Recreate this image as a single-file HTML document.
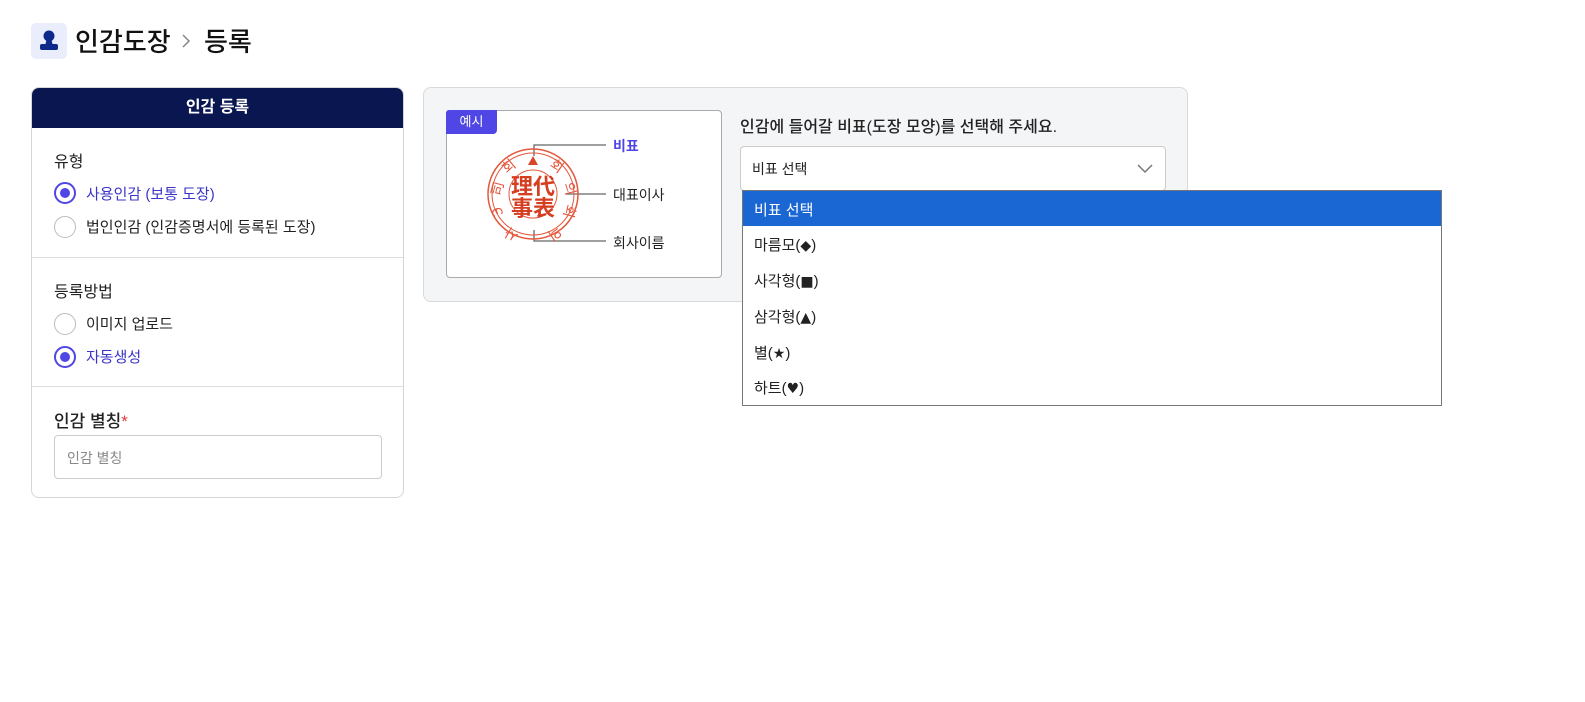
<!DOCTYPE html>
<html><head><meta charset="utf-8"><style>
*{box-sizing:border-box;margin:0;padding:0}
body{width:1585px;height:702px;background:#fff;font-family:"Liberation Sans","Noto Sans CJK KR",sans-serif;color:#222;position:relative;overflow:hidden}
.a{position:absolute;white-space:nowrap}
.radio{position:absolute;width:22px;height:22px;border-radius:50%;border:1px solid #bbb;background:#fff}
.radio.on{border:2px solid #4f46e5}
.radio.on:after{content:"";position:absolute;left:4px;top:4px;width:10px;height:10px;border-radius:50%;background:#4f46e5}
.opt{position:absolute;left:754px;font-size:15px;color:#222}
.s{font-family:"DejaVu Sans",sans-serif;font-size:14px}
</style></head><body>
<div class="a" style="left:31px;top:23px;width:36px;height:36px;background:#eaedfb;border-radius:5px">
<svg width="36" height="36" viewBox="0 0 36 36"><circle cx="18" cy="13" r="5.5" fill="#0d2a8a"/><path d="M15.5 17h5l1 4h-7z" fill="#0d2a8a"/><rect x="9" y="21" width="18" height="6" rx="2" fill="#0d2a8a"/></svg></div>
<div class="a" style="left:75px;top:22px;font-size:26px;font-weight:500;color:#111">인감도장</div>
<svg class="a" style="left:180px;top:33px" width="12" height="16"><path d="M3 2l6 6-6 6" fill="none" stroke="#888" stroke-width="1.5"/></svg>
<div class="a" style="left:204px;top:22px;font-size:26px;font-weight:500;color:#111">등록</div>

<div class="a" style="left:31px;top:87px;width:373px;height:411px;border:1px solid #d6d6d6;border-radius:8px;overflow:hidden">
<div style="height:40px;background:#0a1650;color:#fff;font-weight:bold;font-size:16px;text-align:center;line-height:40px">인감 등록</div>
<div style="position:absolute;left:0;right:0;top:169px;border-top:1px solid #ddd"></div>
<div style="position:absolute;left:0;right:0;top:298px;border-top:1px solid #ddd"></div>
</div>
<div class="a" style="left:54px;top:148px;font-size:16px">유형</div>
<div class="radio on" style="left:54px;top:182px"></div>
<div class="a" style="left:86px;top:183px;font-size:15px;color:#3b35c8">사용인감 (보통 도장)</div>
<div class="radio" style="left:54px;top:216px"></div>
<div class="a" style="left:86px;top:216px;font-size:15px">법인인감 (인감증명서에 등록된 도장)</div>
<div class="a" style="left:54px;top:278px;font-size:16px">등록방법</div>
<div class="radio" style="left:54px;top:313px"></div>
<div class="a" style="left:86px;top:313px;font-size:15px">이미지 업로드</div>
<div class="radio on" style="left:54px;top:346px"></div>
<div class="a" style="left:86px;top:346px;font-size:15px;color:#3b35c8">자동생성</div>
<div class="a" style="left:54px;top:407px;font-size:17px;font-weight:500">인감 별칭<span style="color:#e53935">*</span></div>
<div class="a" style="left:54px;top:435px;width:328px;height:44px;border:1px solid #ccc;border-radius:4px;font-size:14px;color:#888;padding:12px 0 0 12px">인감 별칭</div>

<div class="a" style="left:423px;top:87px;width:765px;height:215px;background:#f4f5f7;border:1px solid #d9d9d9;border-radius:8px"></div>
<div class="a" style="left:446px;top:110px;width:276px;height:168px;background:#fff;border:1px solid #aaa;border-radius:4px"></div>
<div class="a" style="left:446px;top:110px;width:51px;height:24px;background:#4f46e5;color:#fff;font-size:13px;text-align:center;line-height:23px;border-radius:3px 0 4px 0">예시</div>
<svg class="a" style="left:446px;top:110px" width="276" height="168" viewBox="0 0 276 168">
<g fill="none" stroke="#666" stroke-width="1.3"><path d="M88 46V35H160"/><path d="M120 84H160"/><path d="M88 120V131H160"/></g>
<g stroke="#e4573c" fill="none"><circle cx="87" cy="84" r="45" stroke-width="1.5"/><circle cx="87" cy="84" r="41" stroke-width="1"/><circle cx="87" cy="84" r="24" stroke-width="1"/></g>
<path d="M87 46l-5 9h10z" fill="#d9452a"/>
<g fill="#e4573c" font-size="14" font-family="Noto Sans CJK KR" text-anchor="middle"><text x="66" y="60" transform="rotate(-40 66 60)">회</text><text x="56" y="80" transform="rotate(-75 56 80)">司</text><text x="56" y="100" transform="rotate(-110 56 100)">Э</text><text x="68" y="120" transform="rotate(-150 68 120)">사</text><text x="108" y="60" transform="rotate(35 108 60)">회</text><text x="119" y="80" transform="rotate(75 119 80)">의</text><text x="119" y="100" transform="rotate(105 119 100)">회</text><text x="106" y="120" transform="rotate(145 106 120)">의</text></g>
<g fill="#d63e22" font-weight="bold" font-size="22" font-family="Noto Sans CJK SC"><text x="65" y="84">理</text><text x="87" y="84">代</text><text x="65" y="106">事</text><text x="87" y="106">表</text></g>
</svg>
<div class="a" style="left:613px;top:136px;font-size:14px;font-weight:bold;color:#4f46e5">비표</div>
<div class="a" style="left:613px;top:185px;font-size:14px">대표이사</div>
<div class="a" style="left:613px;top:233px;font-size:14px">회사이름</div>

<div class="a" style="left:740px;top:113px;font-size:16px;font-weight:500;color:#222">인감에 들어갈 비표(도장 모양)를 선택해 주세요.</div>
<div class="a" style="left:740px;top:146px;width:426px;height:45px;background:#fff;border:1px solid #ccc;border-radius:4px"></div>
<div class="a" style="left:752px;top:159px;font-size:14px">비표 선택</div>
<svg class="a" style="left:1136px;top:163px" width="18" height="12"><path d="M2 2l7 7 7-7" fill="none" stroke="#777" stroke-width="1.5"/></svg>

<div class="a" style="left:742px;top:190px;width:700px;height:216px;background:#fff;border:1px solid #777"></div>
<div class="a" style="left:743px;top:191px;width:698px;height:35px;background:#1a66d2"></div>
<div class="opt" style="top:199px;color:#fff">비표 선택</div>
<div class="opt" style="top:234px">마름모(<span class="s">◆</span>)</div>
<div class="opt" style="top:270px">사각형(<span class="s">■</span>)</div>
<div class="opt" style="top:306px">삼각형(<span class="s">▲</span>)</div>
<div class="opt" style="top:342px">별(<span class="s">★</span>)</div>
<div class="opt" style="top:377px">하트(<span class="s">♥</span>)</div>
</body></html>
